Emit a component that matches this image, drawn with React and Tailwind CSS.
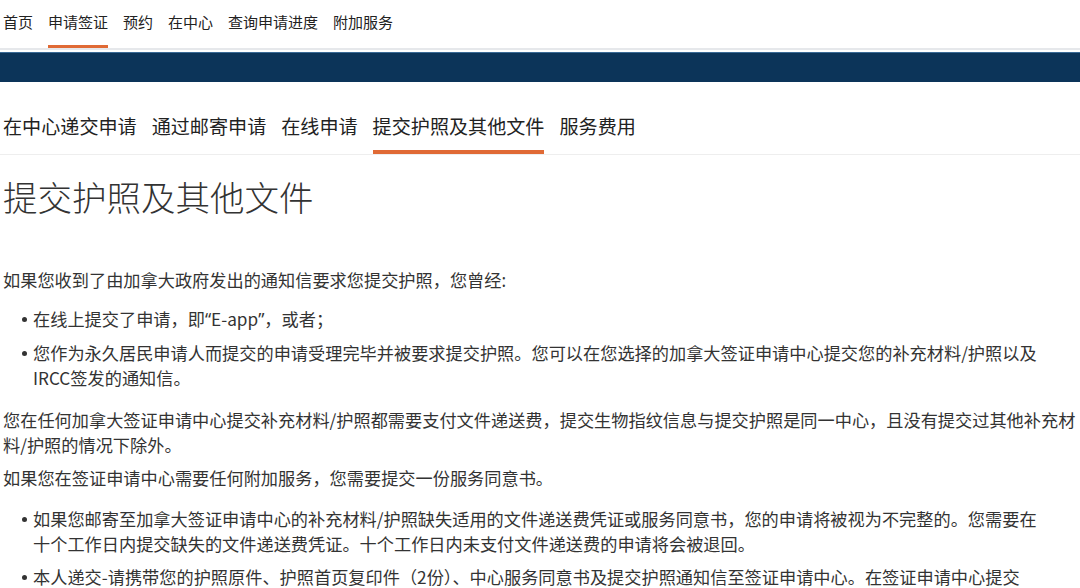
const topNav = ['首页', '申请签证', '预约', '在中心', '查询申请进度', '附加服务'];
const subTabs = ['在中心递交申请', '通过邮寄申请', '在线申请', '提交护照及其他文件', '服务费用'];

const font = { fontFamily: '"Noto Sans CJK SC", "Noto Sans", sans-serif' };
const latin = { fontFamily: '"Noto Sans", sans-serif' };

const Bullet = ({ children }) => (
    <li className="flex">
        <div className="w-[30px] flex-shrink-0">
            <div className="ml-[19px] mt-[11px] w-[5px] h-[5px] rounded-full bg-[#333]" />
        </div>
        <div className="flex-1 min-w-0">{children}</div>
    </li>
);

export default function App() {
    return (
        <div className="w-[1080px] h-[588px] overflow-hidden bg-white text-[#333]" style={font}>
            {/* Top navigation */}
            <nav className="flex gap-[15px] pl-[3px] border-b-2 border-[#e6e8eb]">
                {topNav.map((item, i) => (
                    <div
                        key={item}
                        className={`pt-[12px] pb-[13px] text-[15px] leading-[20px] text-[#222] border-b-[3px] ${
                            i === 1 ? 'border-[#e06a35]' : 'border-transparent'
                        }`}
                    >
                        {item}
                    </div>
                ))}
            </nav>

            {/* Navy band */}
            <div className="mt-[2px] h-[30px] bg-[#0c3459] border-t border-[#3a6a96]" />

            {/* Sub tabs */}
            <div className="flex gap-[15px] pl-[3px] pt-[31px] border-b border-[#eeeeee]">
                {subTabs.map((tab, i) => (
                    <div
                        key={tab}
                        className={`pb-[11px] text-[19.1px] leading-[26px] text-[#222] border-b-4 ${
                            i === 3 ? 'border-[#e06a35]' : 'border-transparent'
                        }`}
                    >
                        {tab}
                    </div>
                ))}
            </div>

            {/* Content */}
            <div className="flex flex-col pl-[3px] text-[17.2px] leading-[25px]">
                <h1 className="mt-[19px] text-[34.5px] leading-[44px] font-light text-[#333]">提交护照及其他文件</h1>

                <p className="mt-[49px]">
                    如果您收到了由加拿大政府发出的通知信要求您提交护照，您曾经<span style={latin}>:</span>
                </p>

                <ul className="mt-[13px] mr-[34px] flex flex-col gap-2">
                    <Bullet>
                        在线上提交了申请，即<span style={latin}>“</span>E-app<span style={latin}>”</span>，或者；
                    </Bullet>
                    <Bullet>
                        您作为永久居民申请人而提交的申请受理完毕并被要求提交护照。您可以在您选择的加拿大签证申请中心提交您的补充材料/护照以及IRCC签发的通知信。
                    </Bullet>
                </ul>

                <p className="mt-[17px]">
                    您在任何加拿大签证申请中心提交补充材料/护照都需要支付文件递送费，提交生物指纹信息与提交护照是同一中心，且没有提交过其他补充材料/护照的情况下除外。
                </p>

                <p className="mt-2">如果您在签证申请中心需要任何附加服务，您需要提交一份服务同意书。</p>

                <ul className="mt-[16px] mr-[34px] flex flex-col gap-2">
                    <Bullet>
                        如果您邮寄至加拿大签证申请中心的补充材料/护照缺失适用的文件递送费凭证或服务同意书，您的申请将被视为不完整的。您需要在十个工作日内提交缺失的文件递送费凭证。十个工作日内未支付文件递送费的申请将会被退回。
                    </Bullet>
                    <Bullet>
                        本人递交-请携带您的护照原件、护照首页复印件（2份）、中心服务同意书及提交护照通知信至签证申请中心。在签证申请中心提交
                    </Bullet>
                </ul>
            </div>
        </div>
    );
}
